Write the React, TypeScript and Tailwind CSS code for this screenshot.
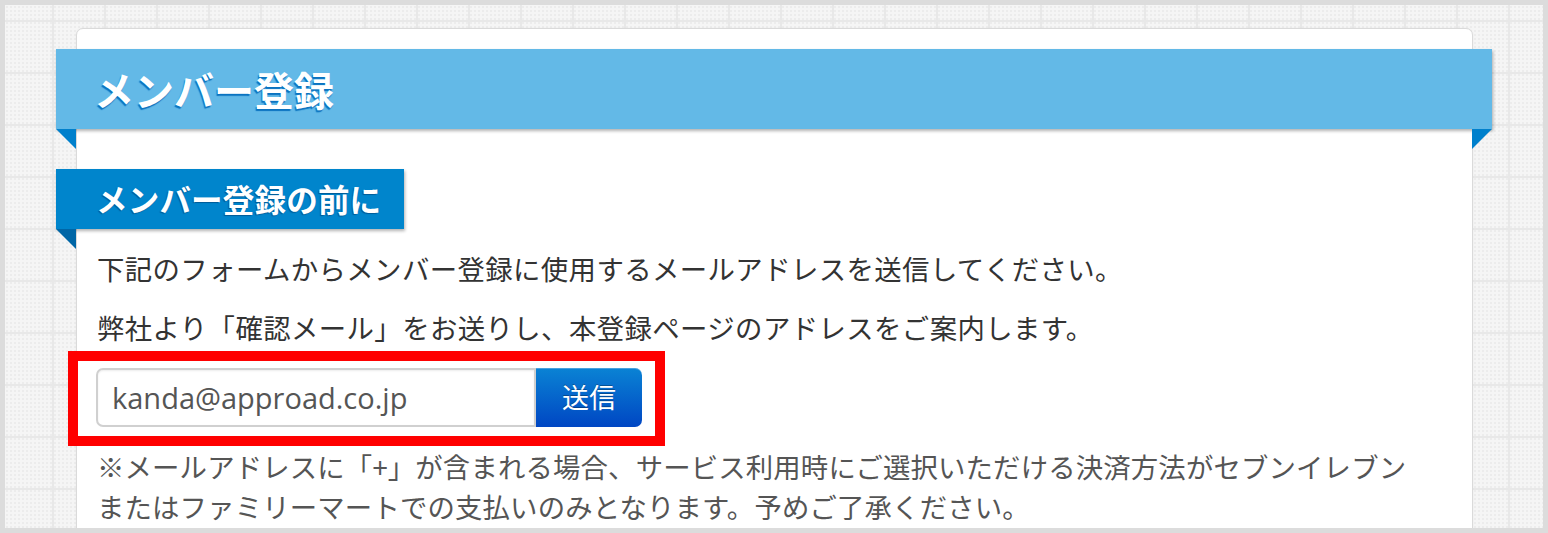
const jp = "font-['Noto_Sans_CJK_JP',sans-serif]";

// Ribbon fold drawn as a small right triangle under a heading band
function Fold({ color, side }: { color: string; side: "left" | "right" }) {
  const points = side === "left" ? "0,0 20,0 20,20" : "0,0 20,0 0,20";
  return (
    <svg width="20" height="20" viewBox="0 0 20 20" className="block">
      <polygon points={points} fill={color} />
    </svg>
  );
}

export default function App() {
  return (
    <div
      className={`h-[533px] w-full overflow-hidden border-[5px] border-[#dcdcdc] bg-[#f5f5f5] ${jp}
        [background-image:linear-gradient(to_right,#e8e8e8_2px,transparent_2px),linear-gradient(to_bottom,#e8e8e8_2px,transparent_2px),radial-gradient(#ececec_1px,transparent_1px)]
        [background-size:52px_52px,52px_52px,4px_4px]
        [background-position:47px_15px,47px_15px,0_0]`}
    >
      {/* white card */}
      <div className="ml-[71px] mt-[23px] h-[560px] w-[1397px] rounded-t-[7px] border border-[#dadada] bg-white pt-[20px] shadow-[0_0_2px_rgba(0,0,0,0.05)]">
        {/* page title band */}
        <div className="ml-[-21px] mr-[-20px]">
          <div className="flex h-[80px] items-center bg-[#63b9e7] pl-[38px] shadow-[1px_2px_3px_rgba(0,0,0,0.3)]">
            <h1 className="text-[40px] font-bold leading-none text-white [text-shadow:-1px_2px_1px_#0a73c0]">
              メンバー登録
            </h1>
          </div>
          <div className="flex justify-between">
            <Fold color="#0080cc" side="left" />
            <Fold color="#0080cc" side="right" />
          </div>
        </div>

        <div className="mt-[20px] pl-[20px] pr-[20px]">
          {/* section heading */}
          <div className="ml-[-41px]">
            <div className="inline-flex h-[60px] items-center bg-[#0085cc] pl-[40px] pr-[23px] shadow-[1px_2px_3px_rgba(0,0,0,0.3)]">
              <h2 className="text-[31.5px] font-bold leading-none tracking-[0.2px] text-white [text-shadow:-1px_1px_1px_#005a96]">
                メンバー登録の前に
              </h2>
            </div>
            <Fold color="#0066a6" side="left" />
          </div>

          <p className="mt-[-1px] text-[27.4px] leading-[40px] tracking-[0.4px] text-[#333]">
            下記のフォームからメンバー登録に使用するメールアドレスを送信してください。
          </p>
          <p className="mt-[19px] text-[27.4px] leading-[40px] tracking-[0.4px] text-[#333]">
            弊社より「確認メール」をお送りし、本登録ページのアドレスをご案内します。
          </p>

          {/* email form, outlined in red */}
          <div className="ml-[-29px] mt-[4px] inline-flex border-[10px] border-[#ff0000] pb-[9px] pl-[18px] pr-[13px] pt-[7px]">
            <input
              readOnly
              value="kanda@approad.co.jp"
              className="h-[59px] w-[440px] rounded-l-[7px] border-2 border-[#d0d0d0] bg-white pl-[14px] font-['Open_Sans',sans-serif] text-[29px] text-[#555] shadow-[inset_0_1px_2px_rgba(0,0,0,0.08)] outline-none"
            />
            <button className="h-[59px] w-[106px] rounded-r-[7px] bg-[linear-gradient(to_bottom,#0a83d4,#0046c3)] text-[27px] text-white shadow-[inset_0_1px_0_rgba(255,255,255,0.25)] [text-shadow:0_-1px_0_rgba(0,0,0,0.3)]">
              送信
            </button>
          </div>

          <p className="text-[27.4px] leading-[40px] tracking-[0.15px] text-[#555]">
            ※メールアドレスに「+」が含まれる場合、サービス利用時にご選択いただける決済方法がセブンイレブン
            <br />
            またはファミリーマートでの支払いのみとなります。予めご了承ください。
          </p>
        </div>
      </div>
    </div>
  );
}
